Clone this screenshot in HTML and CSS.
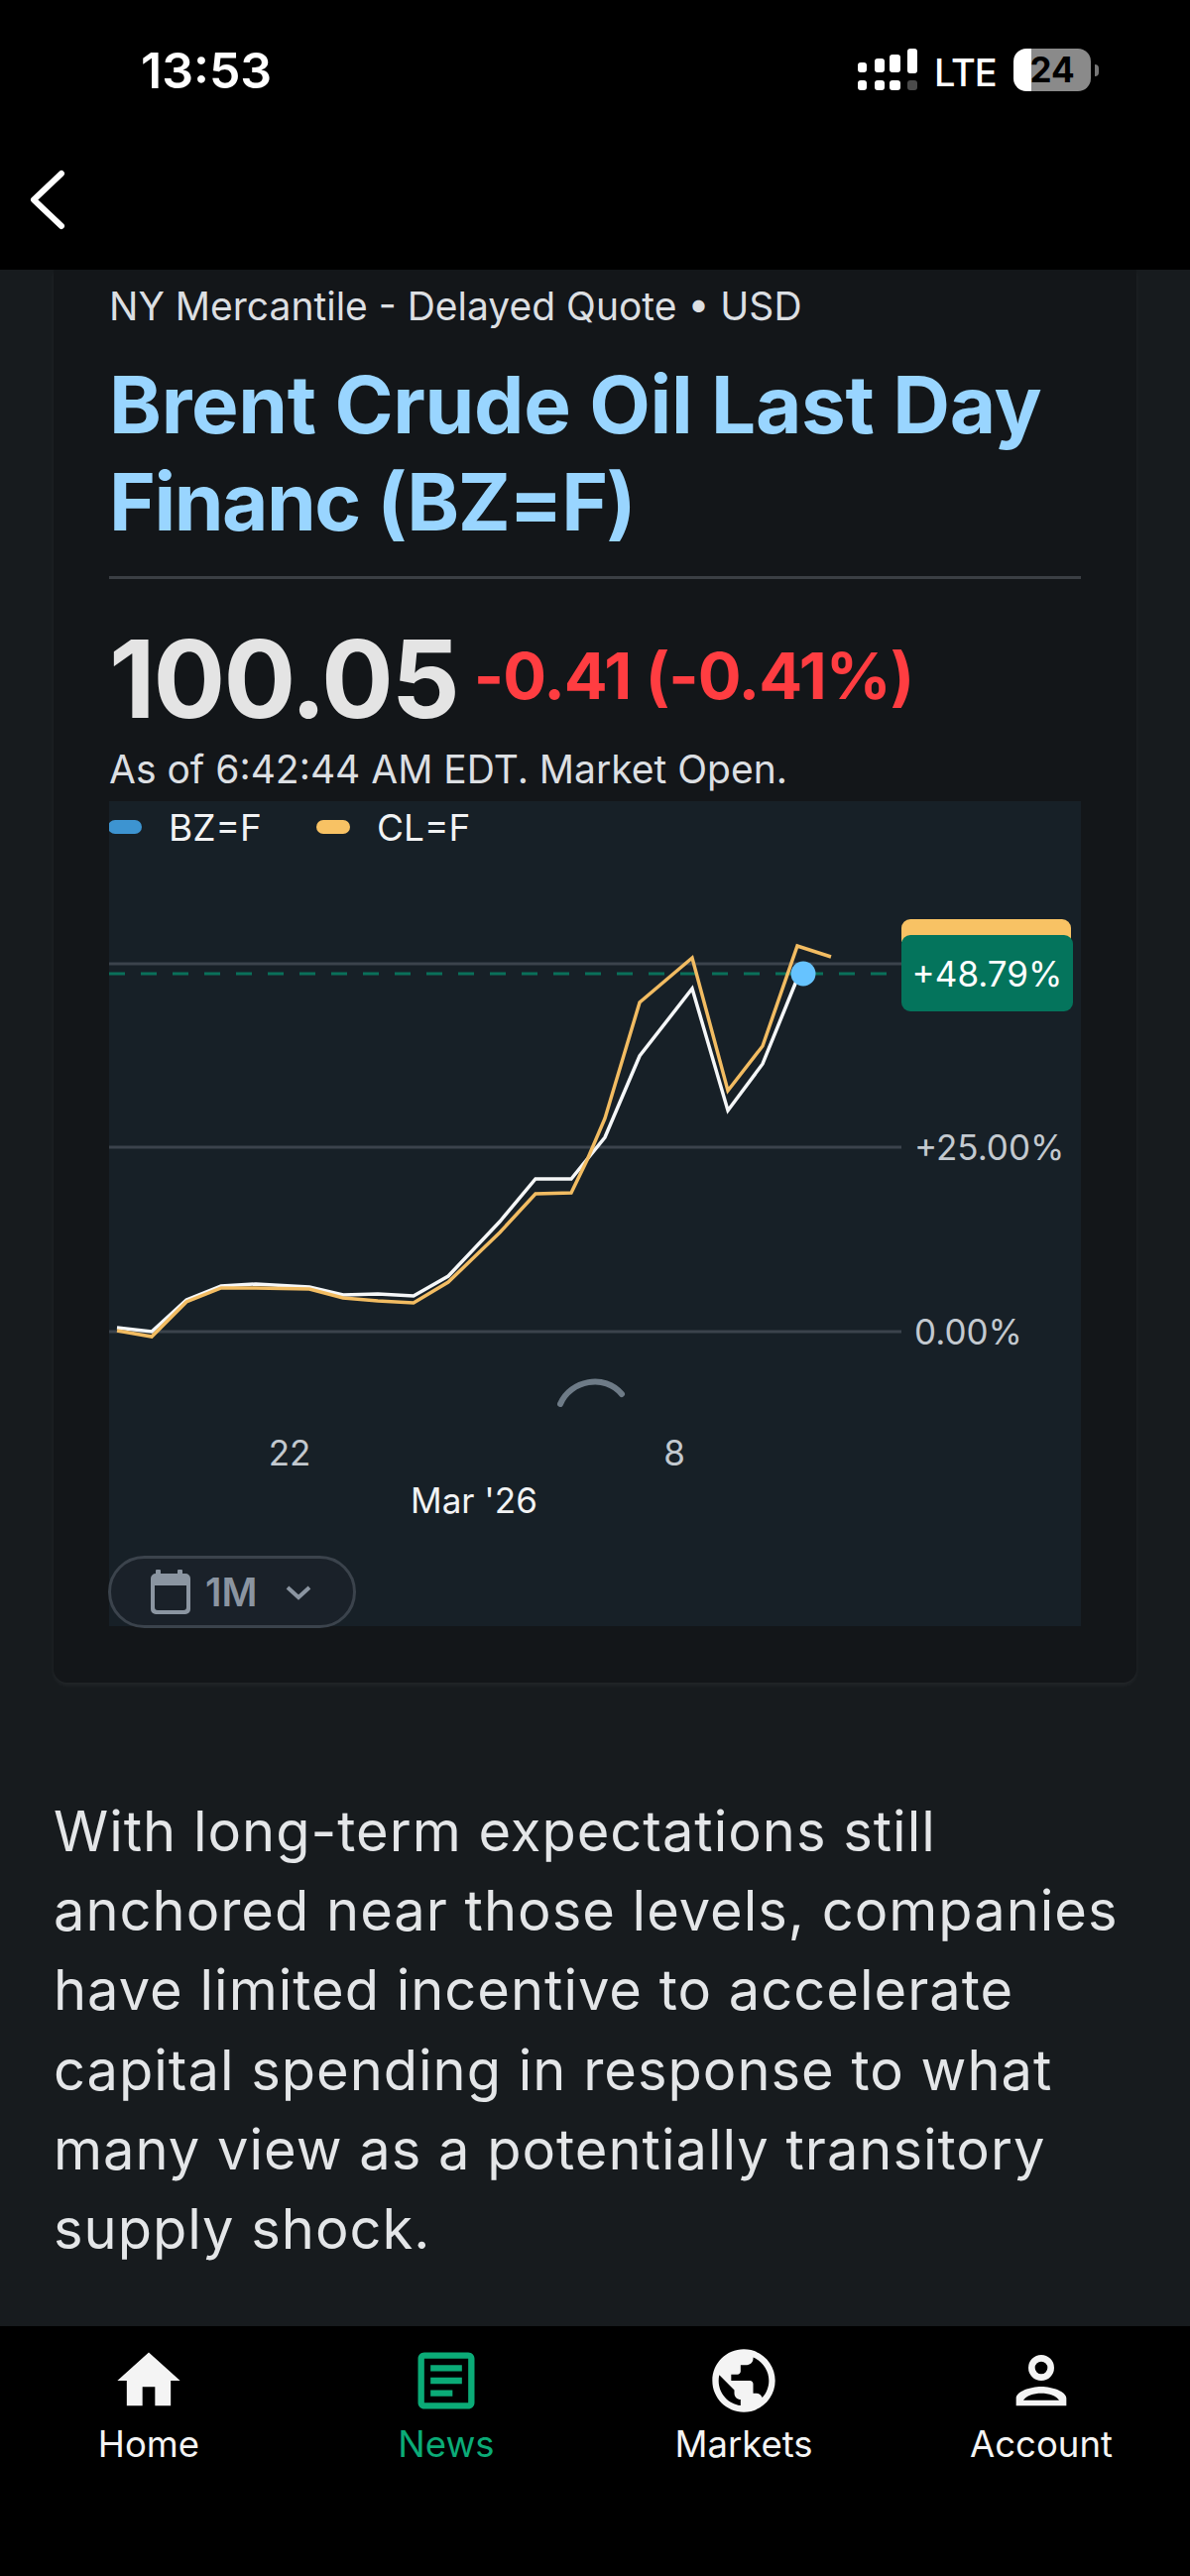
FILE: index.html
```html
<!DOCTYPE html>
<html lang="en">
<head>
    <meta charset="UTF-8">
    <meta name="viewport" content="width=device-width, initial-scale=1.0">
    <title>Brent Crude Oil Last Day Financ (BZ=F)</title>
    <link rel="stylesheet" href="styles.css">
</head>
<body>

    <header class="top">
        <div class="status">
            <span class="clock">13:53</span>
            <div class="status-right">
                <svg class="signal" width="60" height="42" viewBox="0 0 60 42">
                    <rect x="0" y="14" width="9" height="10" rx="3" fill="#fff"/>
                    <rect x="17" y="10" width="10" height="14" rx="3" fill="#fff"/>
                    <rect x="32" y="6" width="11" height="18" rx="3" fill="#fff"/>
                    <rect x="50" y="0" width="10" height="25" rx="3" fill="#fff"/>
                    <rect x="0" y="32" width="9" height="10" rx="3" fill="#fff"/>
                    <rect x="17" y="32" width="10" height="10" rx="3" fill="#fff"/>
                    <rect x="32" y="32" width="11" height="10" rx="3" fill="#fff"/>
                    <rect x="50" y="32" width="10" height="10" rx="3" fill="#4a4a4a"/>
                </svg>
                <span class="lte">LTE</span>
                <div class="battery"><span class="battery-num">24</span></div>
                <span class="battery-cap"></span>
            </div>
        </div>
        <div class="navbar">
            <svg width="44" height="62" viewBox="0 0 44 62">
                <path d="M36 5 L8 31.5 L36 58" fill="none" stroke="#fff" stroke-width="6" stroke-linecap="round" stroke-linejoin="round"/>
            </svg>
        </div>
    </header>

    <main class="content">
        <section class="card">
            <div class="exchange">NY Mercantile - Delayed Quote • USD</div>
            <h1 class="name">
                <span class="name-line">Brent Crude Oil Last Day</span>
                <span class="name-line name-tight">Financ (BZ=F)</span>
            </h1>
            <div class="quote">
                <span class="price">100.05</span>
                <span class="change">-0.41 (-0.41%)</span>
            </div>
            <div class="asof">As of 6:42:44 AM EDT. Market Open.</div>

            <div class="chart">
                <svg class="plot" width="980" height="832" viewBox="110 808 980 832">
                    <rect x="109" y="827" width="34" height="14" rx="7" fill="#3d94d1"/>
                    <text class="legend" x="170" y="848">BZ=F</text>
                    <rect x="319" y="827" width="34" height="14" rx="7" fill="#f8c264"/>
                    <text class="legend" x="380" y="848">CL=F</text>

                    <line class="grid" x1="110" y1="972" x2="909" y2="972"/>
                    <line class="grid" x1="110" y1="1157" x2="909" y2="1157"/>
                    <line class="grid" x1="110" y1="1343" x2="909" y2="1343"/>
                    <line class="dash" x1="110" y1="982" x2="894" y2="982"/>

                    <polyline class="line-white" points="118,1339 153,1343 188,1311 223,1297 258,1295 312,1298 346,1306 381,1305 417,1307 452,1287 504,1232 540,1189 576,1189 610,1147 645,1065 698,997 734,1120 769,1073 806,982"/>
                    <polyline class="line-orange" points="118,1342 153,1348 188,1313 223,1299 258,1299 312,1300 346,1309 381,1312 417,1314 452,1293 504,1243 540,1204 576,1203 592,1170 610,1128 645,1011 698,966 734,1100 769,1055 804,954 838,965"/>
                    <circle cx="810" cy="982" r="12.5" fill="#66c3ff"/>

                    <path d="M909 950v-14a9 9 0 0 1 9-9h153a9 9 0 0 1 9 9v14z" fill="#f8c264"/>
                    <rect x="909" y="943" width="173" height="77" rx="9" fill="#04745c"/>
                    <text class="tag" x="995.5" y="995" text-anchor="middle">+48.79%</text>
                    <text class="axis" x="922" y="1170">+25.00%</text>
                    <text class="axis" x="922" y="1356">0.00%</text>

                    <path d="M565 1416 C575 1392 610 1385 627 1406" fill="none" stroke="#6e7b87" stroke-width="6" stroke-linecap="round"/>

                    <text class="axis" x="292" y="1478" text-anchor="middle">22</text>
                    <text class="axis" x="680" y="1478" text-anchor="middle">8</text>
                    <text class="month" x="478" y="1526" text-anchor="middle">Mar '26</text>
                </svg>
                <div class="range">
                    <svg width="40" height="45" viewBox="0 0 40 45">
                        <path d="M0 9a5 5 0 0 1 5-5h30a5 5 0 0 1 5 5v31a5 5 0 0 1-5 5H5a5 5 0 0 1-5-5z M4 16v22a3 3 0 0 0 3 3h26a3 3 0 0 0 3-3V16z" fill="#8b95a1" fill-rule="evenodd"/>
                        <rect x="5" y="0" width="5" height="8" rx="1" fill="#8b95a1"/>
                        <rect x="27" y="0" width="5" height="8" rx="1" fill="#8b95a1"/>
                    </svg>
                    <span class="range-label">1M</span>
                    <svg class="range-caret" width="26" height="16" viewBox="0 0 26 16">
                        <path d="M2 3 L13 13 L24 3" fill="none" stroke="#8b95a1" stroke-width="4"/>
                    </svg>
                </div>
            </div>
        </section>

        <p class="body-text">With long-term expectations still anchored near those levels, companies have limited incentive to accelerate capital spending in response to what many view as a potentially transitory supply shock.</p>
    </main>

    <nav class="tabs">
        <div class="tab">
            <svg width="76" height="76" viewBox="0 0 24 24" fill="#f4f4f4"><path d="M10 20v-6h4v6h5v-8h3L12 3 2 12h3v8z"/></svg>
            <span>Home</span>
        </div>
        <div class="tab tab-active">
            <svg width="76" height="76" viewBox="0 0 24 24" fill="#0bab77"><path d="M19 5v14H5V5h14m0-2H5c-1.1 0-2 .9-2 2v14c0 1.1.9 2 2 2h14c1.1 0 2-.9 2-2V5c0-1.1-.9-2-2-2z"/><path d="M14 17H7v-2h7v2zm3-4H7v-2h10v2zm0-4H7V7h10v2z"/></svg>
            <span>News</span>
        </div>
        <div class="tab">
            <svg width="76" height="76" viewBox="0 0 24 24" fill="#f4f4f4"><path d="M12 2C6.48 2 2 6.48 2 12s4.48 10 10 10 10-4.48 10-10S17.52 2 12 2zm-1 17.93c-3.95-.49-7-3.85-7-7.93 0-.62.08-1.21.21-1.79L9 15v1c0 1.1.9 2 2 2v1.93zm6.9-2.54c-.26-.81-1-1.39-1.9-1.39h-1v-3c0-.55-.45-1-1-1H8v-2h2c.55 0 1-.45 1-1V7h2c1.1 0 2-.9 2-2v-.41c2.93 1.19 5 4.06 5 7.41 0 2.08-.8 3.97-2.1 5.39z"/></svg>
            <span>Markets</span>
        </div>
        <div class="tab">
            <svg width="76" height="76" viewBox="0 0 24 24" fill="#f4f4f4" fill-rule="evenodd"><path d="M12 3.8a4.1 4.1 0 1 1 0 8.2a4.1 4.1 0 1 1 0-8.2zm0 2.1a2 2 0 1 0 0 4a2 2 0 1 0 0-4z"/><path d="M12 13.9c-3.5 0-8 1.6-8 3.7V20h16v-2.4c0-2.1-4.5-3.7-8-3.7zm0 2.1c-2.4 0-4.8.8-5.7 2.2h11.4C16.8 16.8 14.4 16 12 16z"/></svg>
            <span>Account</span>
        </div>
    </nav>

</body>
</html>
```
FILE: styles.css
```css
* {
    box-sizing: border-box;
}

body {
    margin: 0;
    width: 1200px;
    height: 2598px;
    display: flex;
    flex-direction: column;
    overflow: hidden;
    background: #171b1e;
    color: #e4e6e8;
    font-family: "Inter", "Liberation Sans", sans-serif;
}

/* status bar + back button */
.top {
    height: 272px;
    flex: none;
    background: #000;
    color: #fff;
}

.status {
    height: 130px;
    padding: 48px 92px 0 142px;
    display: flex;
    justify-content: space-between;
}

.clock {
    font-size: 50px;
    font-weight: 600;
    line-height: 46px;
}

.status-right {
    display: flex;
    align-items: flex-start;
}

.signal {
    margin-top: 1px;
}

.lte {
    width: 80px;
    margin-left: 17px;
    font-size: 38px;
    font-weight: 500;
    letter-spacing: -1px;
    line-height: 50px;
}

.battery {
    width: 78px;
    height: 43px;
    margin-top: 1px;
    border-radius: 13px;
    background: linear-gradient(90deg, #fff 0 23%, #8a8a8a 23%);
    color: #000;
    text-align: center;
}

.battery-num {
    font-size: 35px;
    font-weight: 700;
    line-height: 43px;
}

.battery-cap {
    width: 4px;
    height: 12px;
    margin: 17px 0 0 4px;
    border-radius: 0 4px 4px 0;
    background: #777;
}

.navbar {
    padding: 40px 0 0 26px;
}

/* scrolled article */
.content {
    flex: 1;
    padding: 0 54px;
    min-height: 0;
}

.card {
    height: 1425px;
    padding: 13px 56px 0;
    background: #131619;
    border-radius: 0 0 14px 14px;
    box-shadow: 0 3px 4px rgba(255, 255, 255, 0.05);
}

.exchange {
    font-size: 39px;
    line-height: 48px;
    color: #dcdfe2;
}

.name {
    margin: 26px 0 0;
    padding-bottom: 26px;
    border-bottom: 3px solid #3b3f44;
    font-size: 80px;
    font-weight: 700;
    line-height: 98px;
    letter-spacing: -0.3px;
    color: #99d5ff;
}

.name-line {
    display: block;
}

.name-tight {
    letter-spacing: -1.5px;
}

.quote {
    margin-top: 46px;
    display: flex;
    align-items: baseline;
    gap: 16px;
}

.price {
    font-size: 108px;
    font-weight: 700;
    line-height: 110px;
    color: #e4e4e4;
    letter-spacing: -2px;
}

.change {
    font-size: 65px;
    font-weight: 700;
    line-height: 62px;
    color: #ff3d41;
    letter-spacing: -1px;
    position: relative;
    top: -19px;
}

.asof {
    margin: 12px 0 8px;
    font-size: 39px;
    line-height: 48px;
    color: #dcdfe2;
}

.chart {
    height: 832px;
    background: #172027;
    position: relative;
}

.plot {
    display: block;
}

.plot text {
    font-family: "Inter", "Liberation Sans", sans-serif;
}

.legend {
    font-size: 37px;
    fill: #f2f3f4;
}

.grid {
    stroke: #3b434c;
    stroke-width: 3;
}

.dash {
    stroke: #0a705a;
    stroke-width: 3;
    stroke-dasharray: 16 16;
}

.line-white,
.line-orange {
    fill: none;
    stroke-width: 3.5;
    stroke-linejoin: miter;
}

.line-white {
    stroke: #f5f7f8;
}

.line-orange {
    stroke: #f2bc62;
}

.tag {
    font-size: 35px;
    fill: #fff;
}

.axis {
    font-size: 35px;
    fill: #c3c9cf;
}

.month {
    font-size: 35px;
    fill: #f2f3f4;
}

.range {
    position: absolute;
    left: -1px;
    bottom: -2px;
    width: 250px;
    height: 73px;
    padding-left: 40px;
    display: flex;
    align-items: center;
    gap: 15px;
    border: 3px solid #3b434c;
    border-radius: 37px;
    background: #1a2129;
    color: #8b95a1;
}

.range-label {
    font-size: 39px;
    font-weight: 600;
}

.range-caret {
    margin-left: 14px;
}

.body-text {
    margin: 110px 0 0;
    font-size: 56px;
    line-height: 80.2px;
    color: #e4e6e8;
    letter-spacing: 1px;
}

/* bottom tabs */
.tabs {
    height: 252px;
    flex: none;
    background: #000;
    display: grid;
    grid-template-columns: repeat(4, 1fr);
    padding-top: 17px;
}

.tab {
    display: flex;
    flex-direction: column;
    align-items: center;
    color: #f4f4f4;
    font-size: 36.5px;
    line-height: 48px;
}

.tab span {
    margin-top: 2px;
}

.tab-active {
    color: #0bab77;
}
```
